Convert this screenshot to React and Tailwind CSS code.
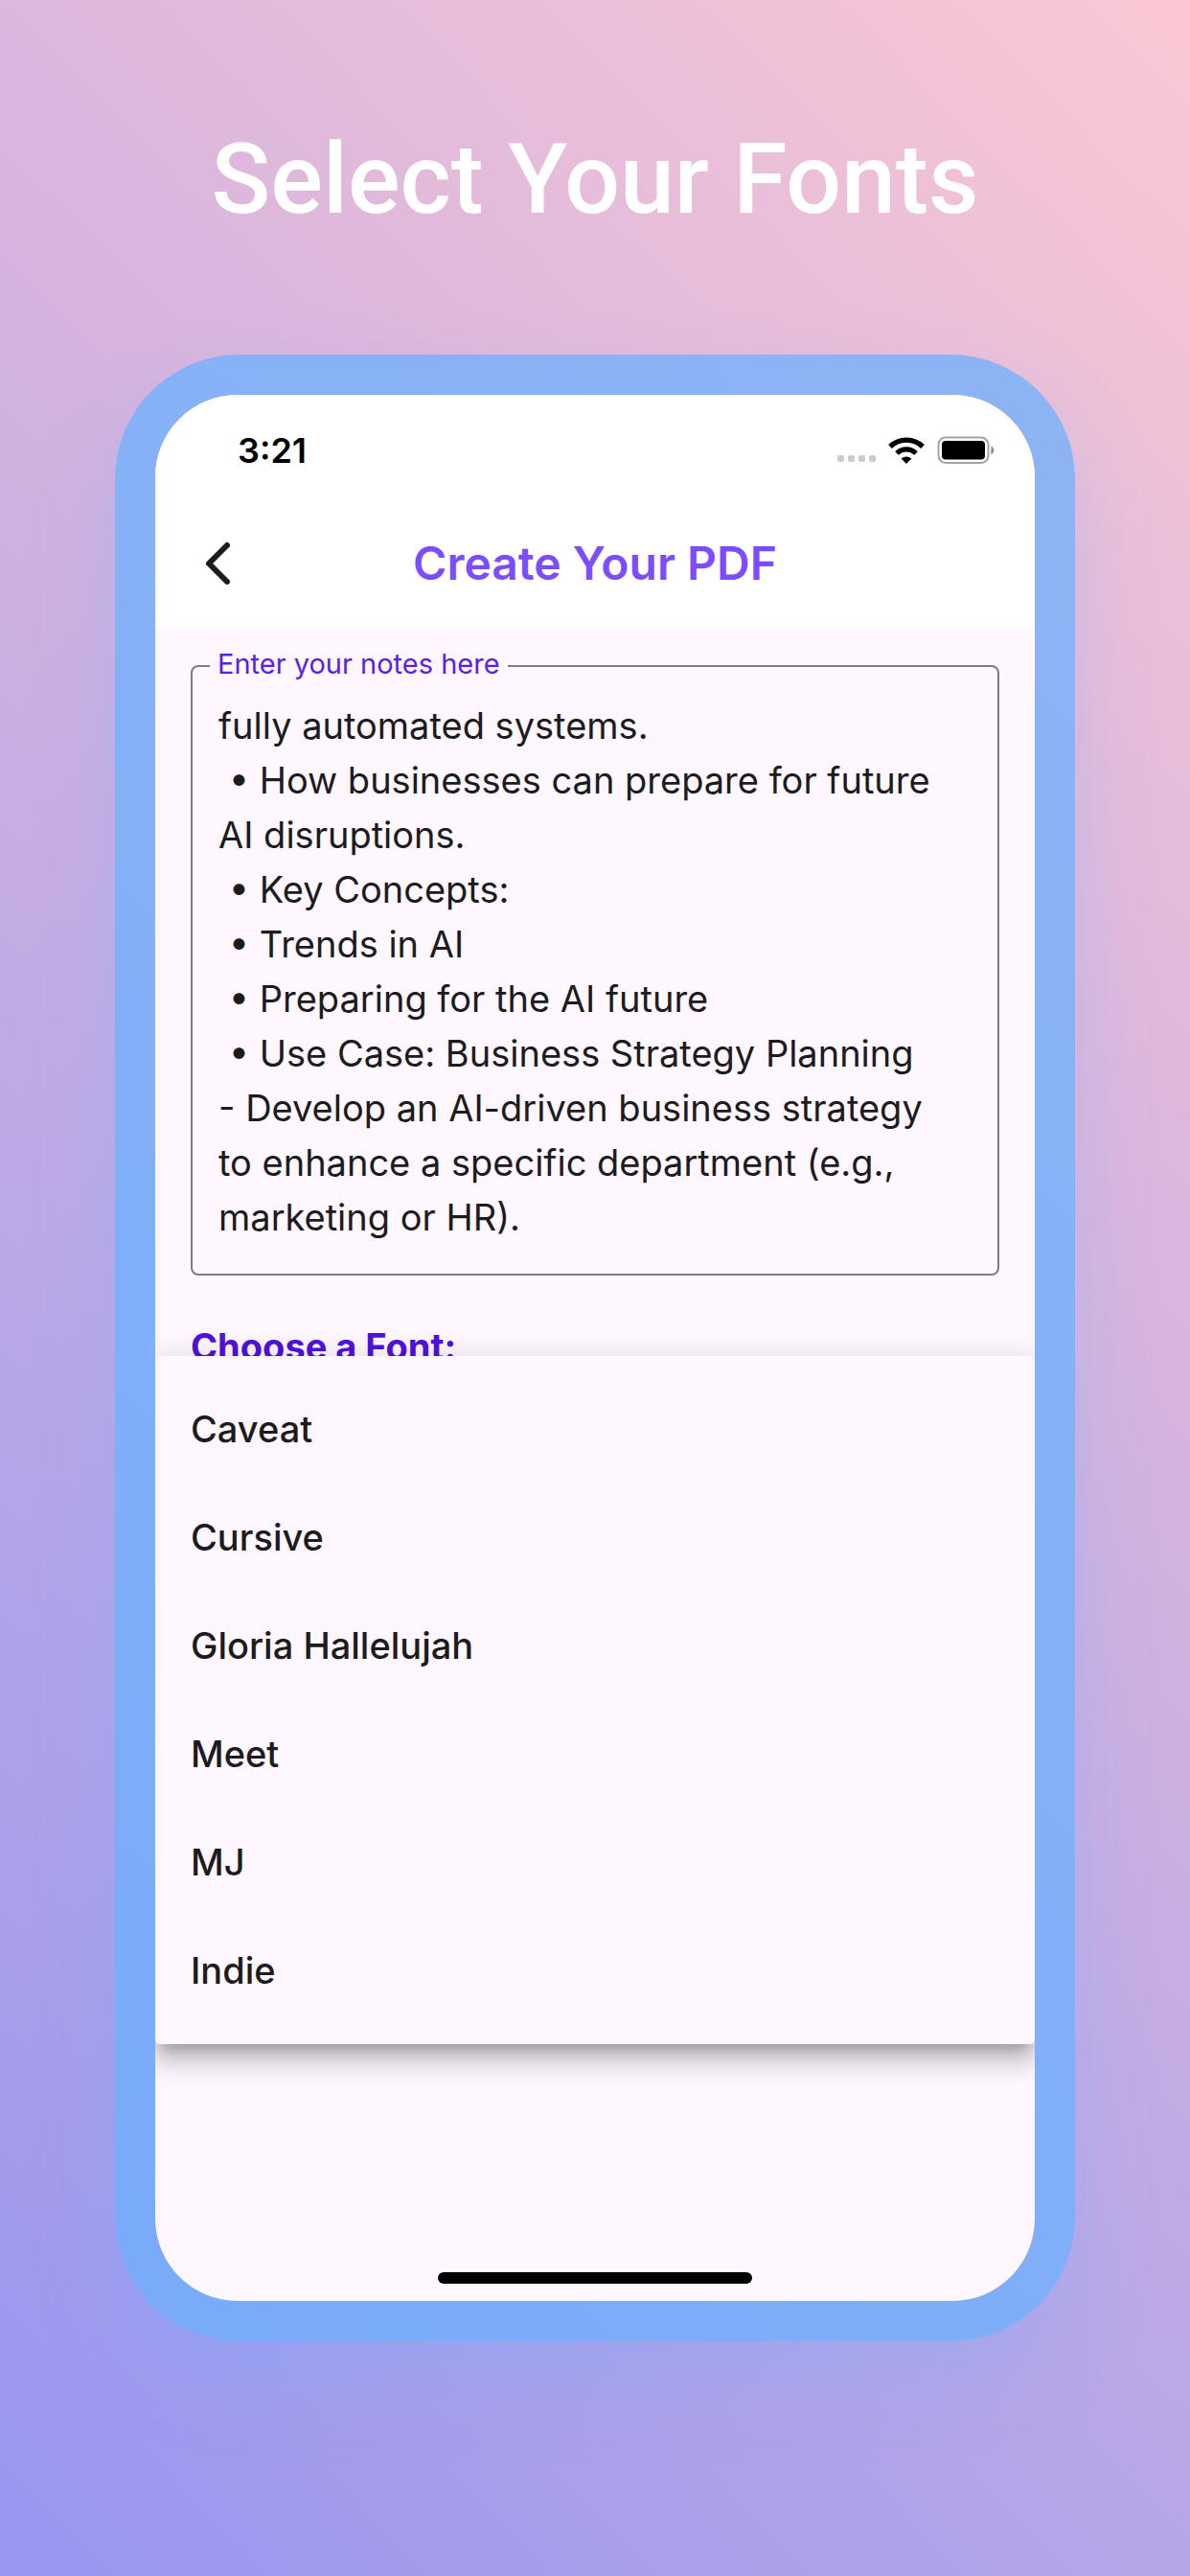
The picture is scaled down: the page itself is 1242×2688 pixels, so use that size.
import React from "react";

const notes = [
  "fully automated systems.",
  " • How businesses can prepare for future AI disruptions.",
  " • Key Concepts:",
  " • Trends in AI",
  " • Preparing for the AI future",
  " • Use Case: Business Strategy Planning",
  "- Develop an AI-driven business strategy to enhance a specific department (e.g., marketing or HR).",
].join("\n");

const fonts = ["Caveat", "Cursive", "Gloria Hallelujah", "Meet", "MJ", "Indie"];

function SignalDots() {
  return (
    <div className="flex gap-1 pt-4">
      <span className="size-[7px] rounded-[2px] bg-[#cbcbcb]" />
      <span className="size-[7px] rounded-[2px] bg-[#cbcbcb]" />
      <span className="size-[7px] rounded-[2px] bg-[#cbcbcb]" />
      <span className="size-[7px] rounded-[2px] bg-[#cbcbcb]" />
    </div>
  );
}

function WifiIcon() {
  return (
    <svg viewBox="0 0 38 28" className="h-7 w-[38px]" fill="none" stroke="#000" aria-hidden="true">
      <path d="M2 10 A24.5 24.5 0 0 1 36 10" strokeWidth="5.4" />
      <path d="M9 17 A14.3 14.3 0 0 1 29 17" strokeWidth="5.2" />
      <path d="M13.6 22.6 A7.8 7.8 0 0 1 24.4 22.6 L19 28 Z" fill="#000" stroke="none" />
    </svg>
  );
}

function BatteryIcon() {
  return (
    <svg viewBox="0 0 60 30" className="h-[30px] w-[60px]" aria-hidden="true">
      <rect x="1.5" y="1.5" width="52" height="26.5" rx="7.5" fill="none" stroke="#a3a3a3" strokeWidth="2" />
      <rect x="5" y="5" width="45" height="19.5" rx="4" fill="#000" />
      <path d="M56.4 10.4 C60.4 12 60.4 17.6 56.4 19.2 Z" fill="#8f8f8f" />
    </svg>
  );
}

function StatusBar() {
  return (
    <div className="flex h-[116px] items-center justify-between pr-[42px] pl-[86px]">
      <span className="text-[36px] leading-none font-semibold text-black">3:21</span>
      <div className="flex items-center gap-[13px]">
        <SignalDots />
        <WifiIcon />
        <BatteryIcon />
      </div>
    </div>
  );
}

function AppBar() {
  return (
    <header className="grid h-[127px] grid-cols-[132px_1fr_132px] items-center pb-2">
      <button type="button" aria-label="Back" className="flex h-full items-center pl-[50px]">
        <svg viewBox="0 0 32 48" className="h-12 w-8" fill="none" stroke="#1d1b20" strokeWidth="6" strokeLinecap="round" strokeLinejoin="round" aria-hidden="true">
          <path d="M25 5 L6 24 L25 43" />
        </svg>
      </button>
      <h2 className="text-center text-[48px] leading-none font-semibold text-[#7c4dff]">Create Your PDF</h2>
    </header>
  );
}

function NotesField() {
  return (
    <fieldset className="mx-[37px] mt-[22px] rounded-lg border-2 border-[#7f7b82] pb-[30px]">
      <legend className="ml-[18px] px-2 leading-8">
        <label htmlFor="notes" className="text-[29px] text-[#5a1ee6]">
          Enter your notes here
        </label>
      </legend>
      <textarea
        id="notes"
        rows={10}
        defaultValue={notes}
        className="mt-4 block w-full resize-none overflow-hidden bg-transparent pr-10 pl-[27px] text-[38px] leading-[57px] text-[#1d1b20] outline-none"
      />
    </fieldset>
  );
}

function FontField() {
  return (
    <section className="relative pt-[50px]">
      <h3 id="font-label" className="px-[37px] text-[38px] leading-[48px] font-bold text-[#4f12dc]">
        Choose a Font:
      </h3>
      <ul
        role="listbox"
        aria-labelledby="font-label"
        className="absolute inset-x-0 top-[84px] rounded-[5px] bg-[#fef7ff] py-5 shadow-[0_12px_12px_-7px_rgba(0,0,0,0.2),0_19px_24px_2px_rgba(0,0,0,0.14),0_7px_33px_5px_rgba(0,0,0,0.12)]"
      >
        {fonts.map((font) => (
          <li key={font} role="option" aria-selected="false">
            <button type="button" className="flex h-[113px] w-full items-center px-[37px] text-left text-[38px] font-medium text-[#1d1b20]">
              {font}
            </button>
          </li>
        ))}
      </ul>
    </section>
  );
}

export default function App() {
  return (
    <main className="flex min-h-screen flex-col items-center bg-[linear-gradient(45deg,#9796f0,#fbc7d4)] px-[120px] pb-[245px] font-['Inter',sans-serif]">
      <div className="flex h-[370px] items-center pt-1">
        <h1 className="text-center font-['Roboto',sans-serif] text-[102px] leading-none font-medium text-white">Select Your Fonts</h1>
      </div>
      <div className="flex w-full flex-1 flex-col rounded-[130px] bg-[#6cb0fe]/75 p-[42px] shadow-[0_40px_80px_rgba(108,176,254,0.25)]">
        <div className="flex flex-1 flex-col overflow-hidden rounded-[86px] bg-[#fef7ff]">
          <div className="bg-white">
            <StatusBar />
            <AppBar />
          </div>
          <div className="flex-1">
            <NotesField />
            <FontField />
          </div>
          <div className="flex justify-center pb-[18px]">
            <div className="h-3 w-[328px] rounded-full bg-black" />
          </div>
        </div>
      </div>
    </main>
  );
}
